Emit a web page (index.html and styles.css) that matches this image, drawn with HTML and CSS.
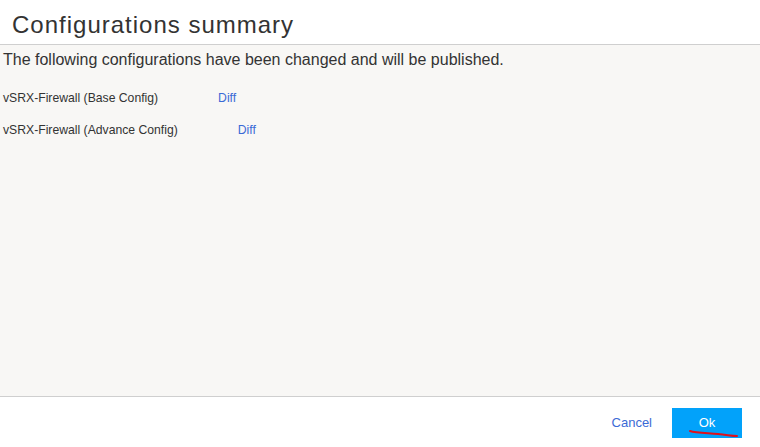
FILE: index.html
```html
<!DOCTYPE html>
<html>
<head>
<meta charset="utf-8">
<link rel="stylesheet" href="styles.css">
</head>
<body>
<div class="dialog">
  <header class="head"><h1 class="title">Configurations summary</h1></header>
  <main class="content">
    <p class="intro">The following configurations have been changed and will be published.</p>
    <div class="row"><span class="name">vSRX-Firewall (Base Config)</span><a class="diff">Diff</a></div>
    <div class="row"><span class="name">vSRX-Firewall (Advance Config)</span><a class="diff">Diff</a></div>
  </main>
  <footer class="foot">
    <button class="btn cancel">Cancel</button>
    <button class="btn ok">Ok<svg class="scribble" width="52" height="12" viewBox="0 0 52 12"><path d="M2 3 C8 5, 20 5, 30 6 S44 8, 49 8" stroke="#e0101a" stroke-width="2" fill="none" stroke-linecap="round"/></svg></button>
  </footer>
</div>
</body>
</html>
```
FILE: styles.css
```css
html, body { margin: 0; padding: 0; }
body { font-family: "Liberation Sans", Arial, sans-serif; color: #333; background: #fff; }
.dialog { width: 760px; height: 447px; display: flex; flex-direction: column; }
.head { height: 45px; border-bottom: 1px solid #cfcfcf; background: #fff; box-sizing: border-box; display: flex; align-items: center; padding-left: 12px; }
.title { margin: 0; font-weight: normal; font-size: 24px; color: #333; letter-spacing: 1px; padding-top: 6px; }
.content { flex: 1; background: #f8f7f5; padding: 5px 3px 0; border-bottom: 1px solid #cfcfcf; }
.intro { margin: 0 0 22px; font-size: 16px; line-height: 19px; color: #333; }
.row { font-size: 12.2px; line-height: 14px; margin-bottom: 18px; color: #333; }
.diff { color: #3b6ad6; margin-left: 60px; cursor: pointer; }
.foot { height: 50px; display: flex; justify-content: flex-end; align-items: center; padding-right: 18px; gap: 20px; background: #fff; }
.btn { font-family: "Liberation Sans", Arial, sans-serif; font-size: 13px; border: none; cursor: pointer; }
.cancel { background: none; color: #3b6ad6; padding: 0; margin-top: 1px; }
.ok { position: relative; background: #02a2fa; color: #fff; width: 70px; height: 30px; margin-top: 1px; }
.scribble { position: absolute; left: 16px; top: 20px; }
```
